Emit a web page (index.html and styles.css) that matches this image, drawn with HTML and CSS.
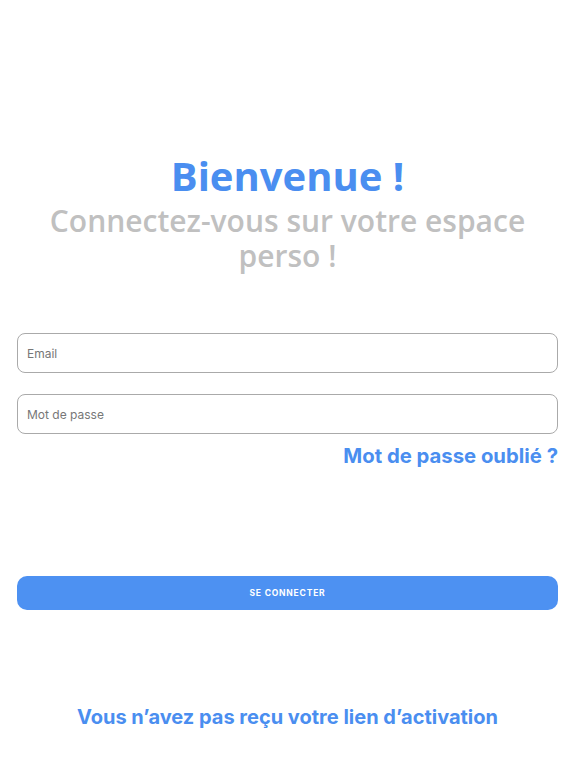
FILE: index.html
```html
<!DOCTYPE html>
<html>
<head>
	<meta charset="utf-8">
	<title>Connexion</title>
	<link rel="stylesheet" href="styles.css">
</head>
<body>
	<div class="page">
		<!--titre-->
		<div class="header">
			<h1 class="title">Bienvenue !</h1>
			<h2 class="subtitle">Connectez-vous sur votre espace perso !</h2>
		</div>
		<!--formulaire-->
		<form class="form">
			<input class="field" type="email" placeholder="Email">
			<input class="field" type="password" placeholder="Mot de passe">
			<a class="forgot" href="#">Mot de passe oublié ?</a>
			<button class="submit" type="button">SE CONNECTER</button>
		</form>
		<a class="activation" href="#">Vous n’avez pas reçu votre lien d’activation</a>
	</div>
</body>
</html>
```

FILE: styles.css
```css
* {
	margin: 0;
	padding: 0;
	box-sizing: border-box;
}

body {
	background-color: #fff;
	font-family: Inter, Roboto, "Liberation Sans", sans-serif;
}

.page {
	display: flex;
	flex-direction: column;
	padding: 152px 18px 0 17px;
}

.header {
	text-align: center;
}

.title {
	color: #4a8ef0;
	font-family: "Open Sans", sans-serif;
	font-size: 40px;
	font-weight: bold;
	line-height: 48px;
}

.subtitle {
	color: #c0c0c0;
	font-family: "Open Sans", sans-serif;
	font-size: 30px;
	font-weight: 600;
	line-height: 35px;
	padding: 0 20px;
	margin-top: 3px;
}

.form {
	display: flex;
	flex-direction: column;
	margin-top: 60px;
}

.field {
	height: 40px;
	border: 1px solid #aaa;
	border-radius: 8px;
	padding: 0 9px;
	font-family: inherit;
	font-size: 12px;
	color: #333;
	outline: none;
}

.field::placeholder {
	color: #777;
}

.field + .field {
	margin-top: 21px;
}

.forgot {
	align-self: flex-end;
	margin-top: 8px;
	color: #4a8ef0;
	font-size: 20.3px;
	font-weight: bold;
	text-decoration: none;
	line-height: 28px;
}

.submit {
	margin-top: 106px;
	height: 34px;
	border: none;
	border-radius: 10px;
	background-color: #4d91f2;
	color: #fff;
	font-family: inherit;
	font-size: 8.5px;
	font-weight: bold;
	letter-spacing: 0.8px;
}

.activation {
	align-self: center;
	margin-top: 93px;
	color: #4a8ef0;
	font-size: 20px;
	font-weight: bold;
	text-decoration: none;
	line-height: 28px;
}
```
